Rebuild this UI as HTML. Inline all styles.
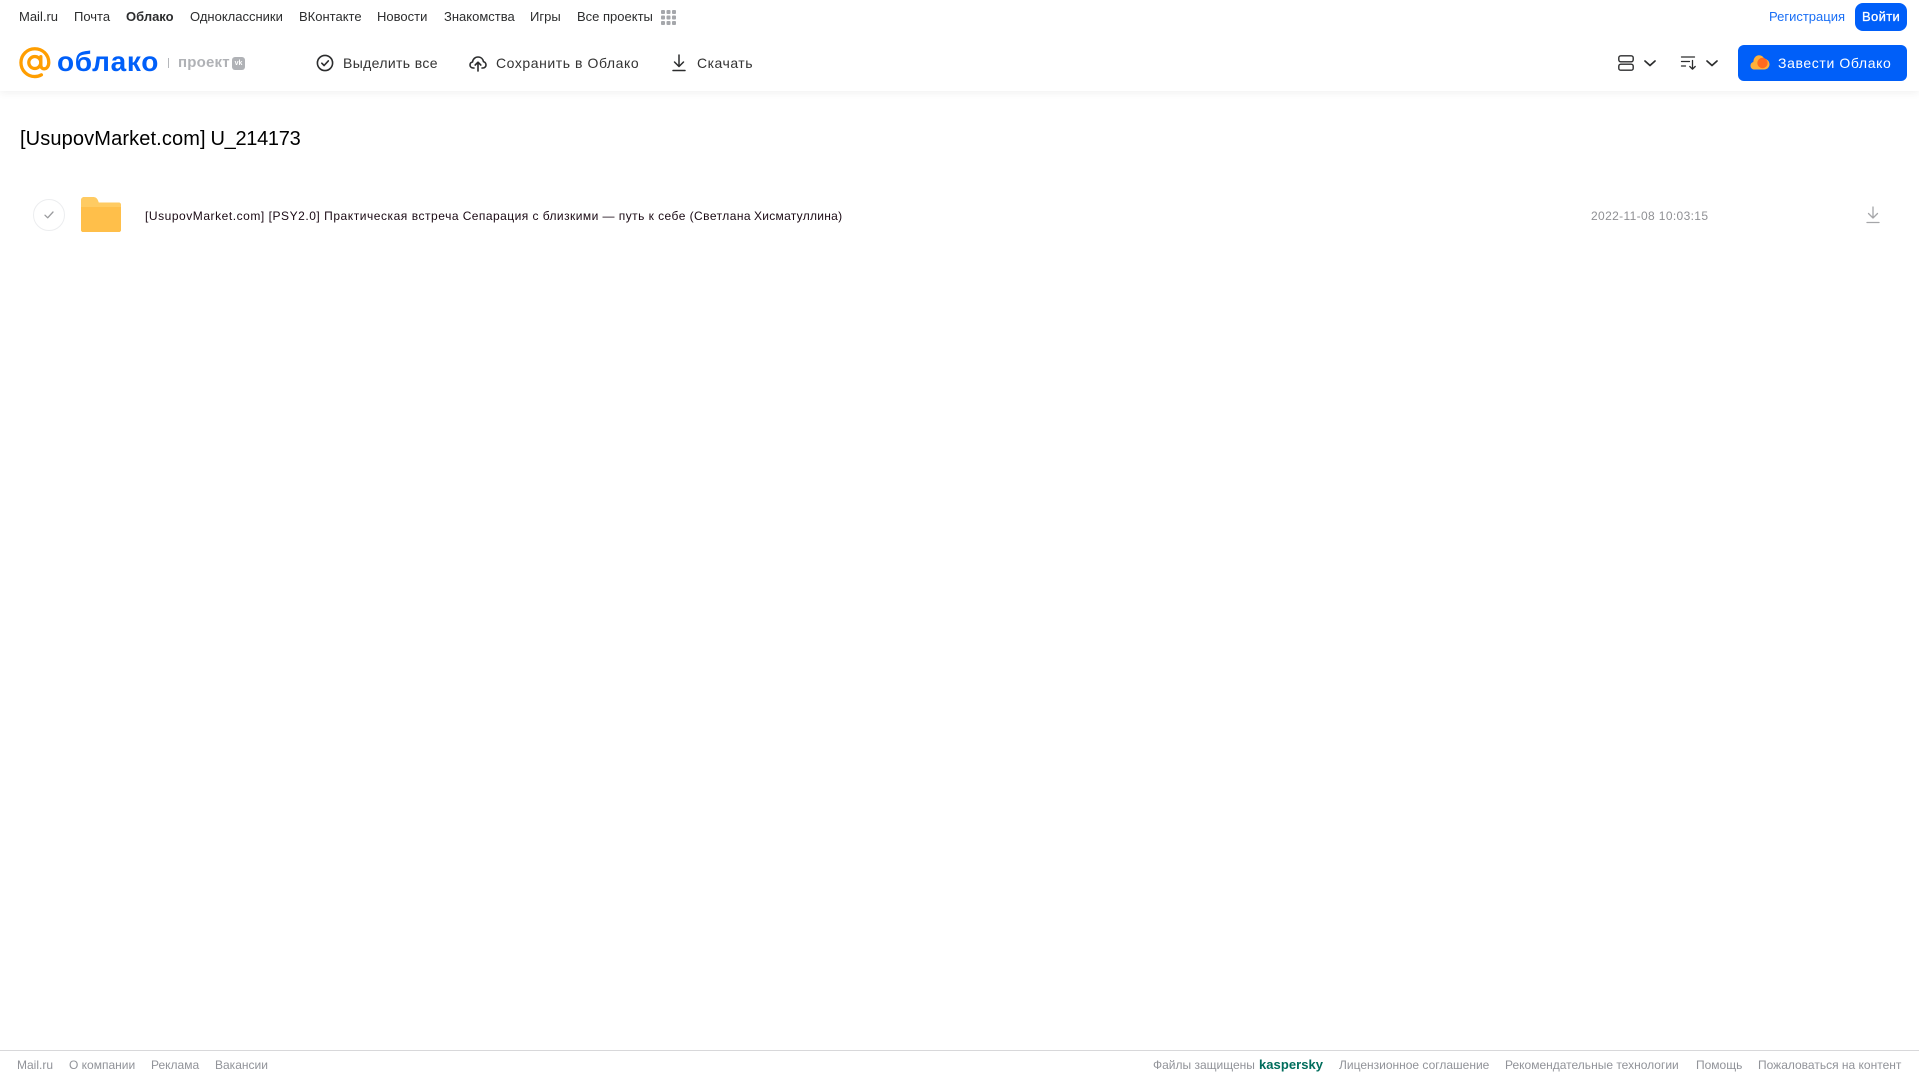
<!DOCTYPE html>
<html lang="ru">
<head>
<meta charset="utf-8">
<title>Облако</title>
<style>
html,body{margin:0;padding:0;background:#fff;}
body{position:relative;width:1919px;height:1079px;overflow:hidden;font-family:"Liberation Sans",sans-serif;}
.t{position:absolute;white-space:nowrap;line-height:1;}
.n{top:10px;font-size:13px;line-height:14px;color:#2c2d2e;}
.a{top:55px;font-size:14px;line-height:16px;color:#333;letter-spacing:.36px;}
.f{top:1058px;font-size:12px;line-height:14px;color:#919399;}
.r{top:209px;font-size:12px;line-height:14px;color:#1a0a14;}
svg{position:absolute;overflow:visible;}
</style>
</head>
<body>
<div style="position:absolute;left:0;top:0;width:1919px;height:91px;background:#fff;box-shadow:0 2px 8px rgba(0,0,0,.06);"></div>

<span class="t n" style="left:19px;">Mail.ru</span>
<span class="t n" style="left:74px;">Почта</span>
<span class="t n" style="left:126px;font-weight:bold;">Облако</span>
<span class="t n" style="left:190px;">Одноклассники</span>
<span class="t n" style="left:299px;">ВКонтакте</span>
<span class="t n" style="left:377px;">Новости</span>
<span class="t n" style="left:444px;">Знакомства</span>
<span class="t n" style="left:530px;">Игры</span>
<span class="t n" style="left:577px;">Все проекты</span>
<svg style="left:661px;top:10px" width="15" height="15" viewBox="0 0 15 15" fill="#a5a7ab">
<rect x="0" y="0" width="4" height="4" rx="1"/><rect x="5.5" y="0" width="4" height="4" rx="1"/><rect x="11" y="0" width="4" height="4" rx="1"/>
<rect x="0" y="5.5" width="4" height="4" rx="1"/><rect x="5.5" y="5.5" width="4" height="4" rx="1"/><rect x="11" y="5.5" width="4" height="4" rx="1"/>
<rect x="0" y="11" width="4" height="4" rx="1"/><rect x="5.5" y="11" width="4" height="4" rx="1"/><rect x="11" y="11" width="4" height="4" rx="1"/>
</svg>

<span class="t n" style="left:1769px;color:#1a6ff5;">Регистрация</span>
<div style="position:absolute;left:1855px;top:3px;width:52px;height:28px;border-radius:8px;background:#005ff9;"></div>
<span class="t n" style="left:1862px;color:#fff;letter-spacing:.35px;-webkit-text-stroke:.3px #fff;">Войти</span>

<!-- logo -->
<svg style="left:19px;top:47px" width="32" height="32" viewBox="0 0 33 33" fill="none" stroke="#ff9e00" stroke-width="3.4" stroke-linecap="round">
<circle cx="16.3" cy="16" r="6.2"/>
<path d="M22.5 10v8.5c0 2.6 1.6 4 3.5 4 2.6 0 4.7-2.7 4.7-6.5C30.700 8 24.300 1.800 16.300 1.800 8.400 1.800 2 8.200 2 16.100c0 8 6.400 14.400 14.300 14.400 2.700 0 4.800-.6 6.800-1.800"/>
</svg>
<span class="t" style="left:57px;top:44px;font-size:28px;line-height:36px;font-weight:bold;color:#005ff9;letter-spacing:.7px;">облако</span>
<div style="position:absolute;left:168px;top:58px;width:1px;height:10px;background:#b5b7bb;"></div>
<span class="t" style="left:178px;top:54px;font-size:15px;line-height:17px;font-weight:bold;color:#b0b2b6;letter-spacing:.2px;">проект</span>
<div style="position:absolute;left:232px;top:57px;width:13px;height:13px;border-radius:3px;background:#b0b2b6;color:#fff;font-size:7px;line-height:13px;font-weight:bold;text-align:center;">vk</div>

<!-- actions -->
<svg style="left:316px;top:54px" width="18" height="18" viewBox="0 0 18 18" fill="none" stroke="#2c2d2e" stroke-width="1.6" stroke-linecap="round" stroke-linejoin="round">
<circle cx="9" cy="9" r="7.600"/><path d="M5.800 9.200l2.300 2.300 4.200-4.600"/>
</svg>
<span class="t a" style="left:343px;">Выделить все</span>
<svg style="left:469px;top:54px" width="18" height="18" viewBox="0 0 18 18" fill="none" stroke="#2c2d2e" stroke-width="1.6" stroke-linecap="round" stroke-linejoin="round">
<path d="M5 14H4.200C2.300 14 1 12.600 1 11c0-1.500 1-2.700 2.500-3C3.900 5 6.200 3 9 3c2.900 0 5 2 5.500 4.700C16 8 17 9.400 17 11c0 1.600-1.300 3-3 3h-1"/>
<path d="M9 17V8.500M6.200 11L9 8.200 11.800 11"/>
</svg>
<span class="t a" style="left:496px;letter-spacing:.56px;">Сохранить в Облако</span>
<svg style="left:671px;top:54px" width="16" height="18" viewBox="0 0 16 18" fill="none" stroke="#2c2d2e" stroke-width="1.500" stroke-linecap="round" stroke-linejoin="round">
<path d="M8 1v11M3.500 8L8 12.500 12.500 8M2 16.500h12"/>
</svg>
<span class="t a" style="left:697px;letter-spacing:.5px;">Скачать</span>

<!-- view controls -->
<svg style="left:1618px;top:55px" width="16" height="16" viewBox="0 0 16 16" fill="none" stroke="#2c2d2e" stroke-width="1.400">
<rect x=".8" y=".8" width="14.400" height="6" rx="2"/><rect x=".8" y="9.200" width="14.400" height="6" rx="2"/>
</svg>
<svg style="left:1644px;top:60px" width="12" height="7" viewBox="0 0 12 7" fill="none" stroke="#2c2d2e" stroke-width="1.700" stroke-linecap="round" stroke-linejoin="round"><path d="M1 1l5 4.500L11 1"/></svg>
<svg style="left:1681px;top:56px" width="16" height="14" viewBox="0 0 16 14" fill="none" stroke="#2c2d2e" stroke-width="1.300" stroke-linecap="round" stroke-linejoin="round">
<path d="M.5 1h13M.5 5.500h8M.5 10h4M11.500 4.500v8.500M8.800 10.500l2.700 2.700 2.700-2.700"/>
</svg>
<svg style="left:1706px;top:60px" width="12" height="7" viewBox="0 0 12 7" fill="none" stroke="#2c2d2e" stroke-width="1.700" stroke-linecap="round" stroke-linejoin="round"><path d="M1 1l5 4.500L11 1"/></svg>

<div style="position:absolute;left:1738px;top:45px;width:169px;height:36px;border-radius:6px;background:#005ff9;"></div>
<svg style="left:1750px;top:54px" width="20" height="17" viewBox="0 0 20 16">
<path d="M4.500 15C2 15 .5 13.200.5 11.200c0-1.900 1.200-3.300 2.800-3.700C3.600 3.400 6 .8 9 .8c2.500 0 4.400 1.500 5.200 3.500 3 .2 5.300 2.600 5.300 5.500 0 2.900-2.300 5.200-5.200 5.200z" fill="#ffb03a"/>
<circle cx="12.500" cy="8.500" r="5.200" fill="#ff6a1f"/>
</svg>
<span class="t a" style="left:1778px;color:#fff;letter-spacing:.62px;">Завести Облако</span>

<!-- heading -->
<span class="t" style="left:20px;top:127px;font-size:20px;line-height:24px;color:#000;letter-spacing:.13px;">[UsupovMarket.com]</span>
<span class="t" style="left:210.5px;top:127px;font-size:20px;line-height:24px;color:#000;letter-spacing:-.3px;">U_214173</span>

<!-- row -->
<div style="position:absolute;left:33px;top:199px;width:30px;height:30px;border:1px solid #ecedef;border-radius:50%;"></div>
<svg style="left:44px;top:211px" width="10" height="8" viewBox="0 0 10 8" fill="none" stroke="#9a9b9e" stroke-width="1.300" stroke-linecap="round" stroke-linejoin="round"><path d="M1 4.200l2.700 2.600L9 1"/></svg>
<svg style="left:81px;top:197px" width="40" height="35" viewBox="0 0 40 35">
<path d="M3 0h9c2.500 0 3.800 1 4.800 3l1 2.500H38c1.100 0 2 .9 2 2V33c0 1.100-.9 2-2 2H2c-1.100 0-2-.9-2-2V3C0 1.300 1.300 0 3 0z" fill="#ffcb62"/>
<path d="M0 10h40v23c0 1.100-.9 2-2 2H2c-1.100 0-2-.9-2-2z" fill="#ffbf4a"/>
</svg>
<span class="t r" style="left:145px;letter-spacing:.54px;">[UsupovMarket.com] [PSY2.0] Практическая встреча</span>
<span class="t r" style="left:462.7px;letter-spacing:.45px;">Сепарация с близкими — путь к себе (Светлана</span>
<span class="t r" style="left:754px;letter-spacing:.28px;">Хисматуллина)</span>
<span class="t" style="left:1591px;top:209px;font-size:12px;line-height:14px;color:#8f9094;letter-spacing:.36px;">2022-11-08 10:03:15</span>
<svg style="left:1866px;top:206px" width="14" height="18" viewBox="0 0 14 18" fill="none" stroke="#a5a6a9" stroke-width="1.300" stroke-linecap="round" stroke-linejoin="round">
<path d="M7 1v11M2.500 7.500L7 12l4.500-4.500M1 16.500h12"/>
</svg>

<!-- footer -->
<div style="position:absolute;left:0;top:1050px;width:1919px;height:1px;background:#d8d8da;"></div>
<span class="t f" style="left:17px;">Mail.ru</span>
<span class="t f" style="left:69px;">О компании</span>
<span class="t f" style="left:151px;">Реклама</span>
<span class="t f" style="left:215px;">Вакансии</span>
<span class="t f" style="left:1153px;">Файлы защищены</span>
<span class="t" style="left:1259px;top:1057px;font-size:13px;line-height:16px;font-weight:bold;color:#006d5c;letter-spacing:.05px;">kaspersky</span>
<span class="t f" style="left:1339px;">Лицензионное соглашение</span>
<span class="t f" style="left:1505px;">Рекомендательные технологии</span>
<span class="t f" style="left:1696px;">Помощь</span>
<span class="t f" style="left:1758px;">Пожаловаться на контент</span>
</body>
</html>
